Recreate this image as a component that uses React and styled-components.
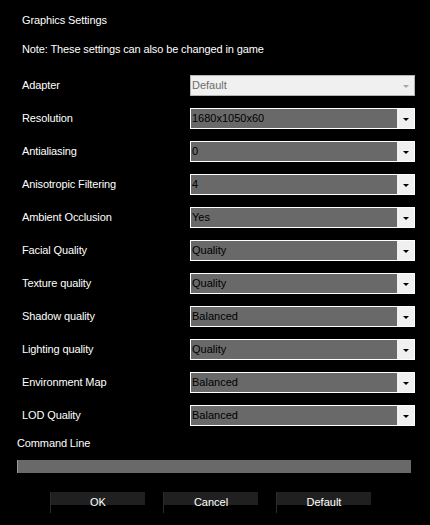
import React from 'react';
import styled, { createGlobalStyle } from 'styled-components';

const Global = createGlobalStyle`
    html, body {
        margin: 0;
        background: #000;
    }
    body {
        font-family: "Liberation Sans", Arial, sans-serif;
        font-size: 11px;
        letter-spacing: -0.12px;
        color: #fff;
    }
`;

const Window = styled.div`
    width: 430px;
    height: 525px;
    background: #000;
    overflow: hidden;
    display: flex;
    flex-direction: column;
`;

const Heading = styled.div`
    margin: 13px 0 0 22px;
    line-height: 14px;
`;

const Note = styled.div`
    margin: 15px 0 0 22px;
    line-height: 14px;
`;

const Rows = styled.div`
    margin-top: 19px;
    display: flex;
    flex-direction: column;
    gap: 12px;
`;

const Row = styled.div`
    display: flex;
    align-items: center;
    height: 21px;
    padding-left: 22px;
`;

const Label = styled.span`
    width: 168px;
    margin-top: -1px;
`;

const Combo = styled.div`
    width: 225px;
    height: 21px;
    box-sizing: border-box;
    display: flex;
    border: 1px solid ${p => (p.disabled ? '#b4b4b4' : '#fff')};
    background: ${p => (p.disabled ? '#f0f0f0' : '#696969')};
    color: ${p => (p.disabled ? '#6d6d6d' : '#000')};
    letter-spacing: 0;
`;

const ComboText = styled.span`
    flex: 1;
    line-height: 19px;
    padding-left: 1px;
`;

const ArrowBox = styled.span`
    width: 17px;
    display: flex;
    align-items: center;
    justify-content: center;
    background: #f0f0f0;
`;

const Arrow = styled.span`
    width: 0;
    height: 0;
    margin-top: 1px;
    border-left: 3px solid transparent;
    border-right: 3px solid transparent;
    border-top: 3px solid ${p => (p.disabled ? '#a6a6a6' : '#000')};
`;

const CmdLabel = styled.div`
    margin: 10px 0 0 17px;
    line-height: 14px;
`;

const CmdInput = styled.div`
    margin: 10px 0 0 17px;
    width: 394px;
    height: 13px;
    box-sizing: border-box;
    background: #696969;
    border-left: 1px solid #9a9a9a;
`;

const Buttons = styled.div`
    margin: 19px 0 0 50px;
    display: flex;
    gap: 18px;
`;

const Button = styled.div`
    width: 95px;
    height: 21px;
    box-sizing: border-box;
    border-left: 1px solid #2c2c2c;
    background: linear-gradient(#202020 0, #202020 62%, #000 62%);
    text-align: center;
    line-height: 21px;
    letter-spacing: 0;
`;

const settings = [
    ['Adapter', 'Default', true],
    ['Resolution', '1680x1050x60'],
    ['Antialiasing', '0'],
    ['Anisotropic Filtering', '4'],
    ['Ambient Occlusion', 'Yes'],
    ['Facial Quality', 'Quality'],
    ['Texture quality', 'Quality'],
    ['Shadow quality', 'Balanced'],
    ['Lighting quality', 'Quality'],
    ['Environment Map', 'Balanced'],
    ['LOD Quality', 'Balanced'],
];

function App() {
    return (
        <Window>
            <Global />
            <Heading>Graphics Settings</Heading>
            <Note>Note: These settings can also be changed in game</Note>
            <Rows>
                {settings.map(([label, value, disabled]) => (
                    <Row key={label}>
                        <Label>{label}</Label>
                        <Combo disabled={disabled}>
                            <ComboText>{value}</ComboText>
                            <ArrowBox><Arrow disabled={disabled} /></ArrowBox>
                        </Combo>
                    </Row>
                ))}
            </Rows>
            <CmdLabel>Command Line</CmdLabel>
            <CmdInput />
            <Buttons>
                <Button>OK</Button>
                <Button>Cancel</Button>
                <Button>Default</Button>
            </Buttons>
        </Window>
    );
}

export default App;
